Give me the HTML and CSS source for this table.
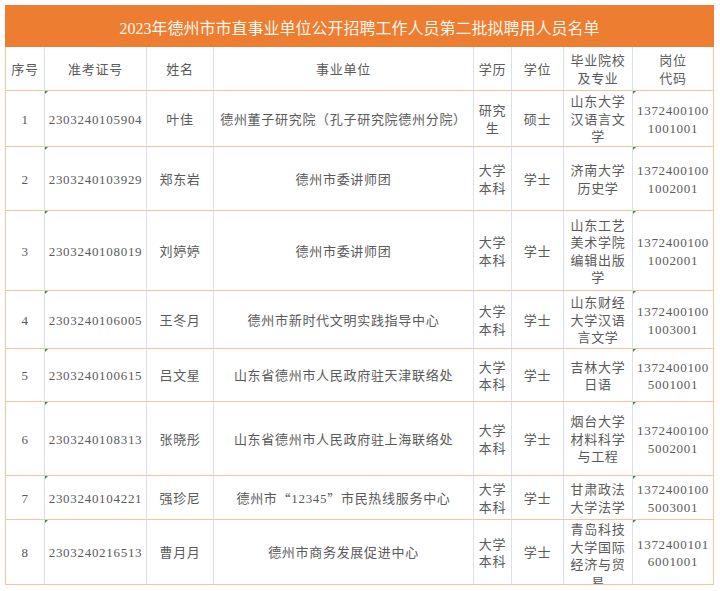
FILE: index.html
```html
<!DOCTYPE html>
<html lang="zh">
<head>
<meta charset="utf-8">
<link rel="stylesheet" href="styles.css">
</head>
<body>
<div class="wrap">
  <div class="title">2023年德州市市直事业单位公开招聘工作人员第二批拟聘用人员名单</div>
  <div class="sheet">
    <div class="c first h">序号</div>
    <div class="c h">准考证号</div>
    <div class="c h">姓名</div>
    <div class="c h">事业单位</div>
    <div class="c h">学历</div>
    <div class="c h">学位</div>
    <div class="c h">毕业院校及专业</div>
    <div class="c last h">岗位<br>代码</div>

    <div class="c first r1">1</div>
    <div class="c mark num">2303240105904</div>
    <div class="c">叶佳</div>
    <div class="c">德州董子研究院（孔子研究院德州分院）</div>
    <div class="c">研究生</div>
    <div class="c">硕士</div>
    <div class="c">山东大学汉语言文学</div>
    <div class="c last mark code">13724001001001001</div>

    <div class="c first r2">2</div>
    <div class="c mark num">2303240103929</div>
    <div class="c">郑东岩</div>
    <div class="c">德州市委讲师团</div>
    <div class="c">大学本科</div>
    <div class="c">学士</div>
    <div class="c">济南大学历史学</div>
    <div class="c last mark code">13724001001002001</div>

    <div class="c first">3</div>
    <div class="c mark num">2303240108019</div>
    <div class="c">刘婷婷</div>
    <div class="c">德州市委讲师团</div>
    <div class="c">大学本科</div>
    <div class="c">学士</div>
    <div class="c">山东工艺美术学院编辑出版学</div>
    <div class="c last mark code">13724001001002001</div>

    <div class="c first">4</div>
    <div class="c mark num">2303240106005</div>
    <div class="c">王冬月</div>
    <div class="c">德州市新时代文明实践指导中心</div>
    <div class="c">大学本科</div>
    <div class="c">学士</div>
    <div class="c">山东财经大学汉语言文学</div>
    <div class="c last mark code">13724001001003001</div>

    <div class="c first">5</div>
    <div class="c mark num">2303240100615</div>
    <div class="c">吕文星</div>
    <div class="c">山东省德州市人民政府驻天津联络处</div>
    <div class="c">大学本科</div>
    <div class="c">学士</div>
    <div class="c">吉林大学日语</div>
    <div class="c last mark code">13724001005001001</div>

    <div class="c first">6</div>
    <div class="c mark num">2303240108313</div>
    <div class="c">张晓彤</div>
    <div class="c">山东省德州市人民政府驻上海联络处</div>
    <div class="c">大学本科</div>
    <div class="c">学士</div>
    <div class="c">烟台大学材料科学与工程</div>
    <div class="c last mark code">13724001005002001</div>

    <div class="c first">7</div>
    <div class="c mark num">2303240104221</div>
    <div class="c">强珍尼</div>
    <div class="c">德州市<span class="q">“</span>12345<span class="q">”</span>市民热线服务中心</div>
    <div class="c">大学本科</div>
    <div class="c">学士</div>
    <div class="c">甘肃政法大学法学</div>
    <div class="c last mark code">13724001005003001</div>

    <div class="c first">8</div>
    <div class="c mark num">2303240216513</div>
    <div class="c">曹月月</div>
    <div class="c">德州市商务发展促进中心</div>
    <div class="c">大学本科</div>
    <div class="c">学士</div>
    <div class="c top">青岛科技大学国际经济与贸易</div>
    <div class="c last mark code">13724001016001001</div>
  </div>
</div>
</body>
</html>
```

FILE: styles.css
```css
html, body {
  margin: 0;
  padding: 0;
  background: #ffffff;
}
body {
  padding: 5px 0 0 5px;
  font-family: "Liberation Serif", "Noto Sans CJK SC", serif;
}
.wrap {
  width: 709px;
}
.title {
  height: 42px;
  background: #ed7d31;
  color: #fff4ea;
  font-size: 16px;
  display: flex;
  align-items: center;
  justify-content: center;
  padding-top: 2px;
  box-sizing: border-box;
}
.sheet {
  display: grid;
  grid-template-columns: 40px 102px 67px 260px 38px 52px 69px 81px;
  grid-template-rows: 44px 56px 64px 80px 58px 53px 74px 44px 65px;
}
.c {
  position: relative;
  box-sizing: border-box;
  display: flex;
  align-items: center;
  justify-content: center;
  text-align: center;
  padding: 2px 4px 0 4px;
  overflow: hidden;
  border-right: 1px solid #d9dfeb;
  border-bottom: 1.5px solid #f8c4a0;
  color: #5a5a5a;
  font-size: 13px;
  letter-spacing: 0.7px;
  line-height: 17.5px;
  word-break: break-all;
}
.c.first {
  border-left: 1.5px solid #f8c4a0;
}
.c.last {
  border-right: 1.5px solid #f8c4a0;
}
.c.code {
  padding-left: 3px;
  padding-right: 3px;
}
.c.num {
  padding-left: 1px;
  padding-right: 1px;
  white-space: nowrap;
}
.c.top {
  align-items: flex-start;
  padding-top: 1px;
}
.q {
  font-family: "Noto Sans CJK SC", sans-serif;
}
.c.mark::before {
  content: "";
  position: absolute;
  left: 0;
  top: 0;
  width: 0;
  height: 0;
  border-top: 3px solid #1e9a3c;
  border-right: 3px solid transparent;
}
```
